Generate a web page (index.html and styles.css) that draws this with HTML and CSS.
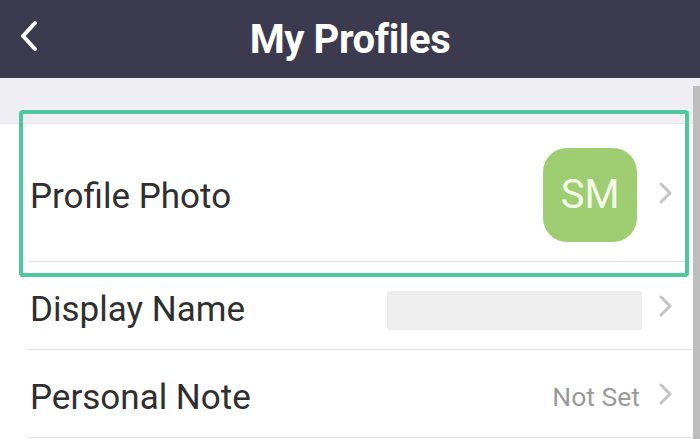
FILE: index.html
```html
<!DOCTYPE html>
<html>
<head>
<meta charset="utf-8">
<link rel="stylesheet" href="styles.css">
</head>
<body>
<div class="app">
  <header class="topbar">
    <span class="back">
      <svg width="22" height="32" viewBox="0 0 22 32"><path d="M17 3 L5 16 L17 29" fill="none" stroke="#fff" stroke-width="4" stroke-linecap="round" stroke-linejoin="round"/></svg>
    </span>
    <h1 class="title">My Profiles</h1>
  </header>
  <div class="content">
    <div class="band"></div>
    <ul class="list">
      <li class="row row-photo">
        <span class="label">Profile Photo</span>
        <span class="value">
          <span class="avatar">SM</span>
          <svg class="chev" width="16" height="24" viewBox="0 0 16 24"><path d="M3 3 L12 12 L3 21" fill="none" stroke="#c4c4c4" stroke-width="3" stroke-linecap="round" stroke-linejoin="round"/></svg>
        </span>
      </li>
      <li class="row">
        <span class="label">Display Name</span>
        <span class="value">
          <span class="blank"></span>
          <svg class="chev" width="16" height="24" viewBox="0 0 16 24"><path d="M3 3 L12 12 L3 21" fill="none" stroke="#c4c4c4" stroke-width="3" stroke-linecap="round" stroke-linejoin="round"/></svg>
        </span>
      </li>
      <li class="row">
        <span class="label">Personal Note</span>
        <span class="value">
          <span class="muted">Not Set</span>
          <svg class="chev" width="16" height="24" viewBox="0 0 16 24"><path d="M3 3 L12 12 L3 21" fill="none" stroke="#c4c4c4" stroke-width="3" stroke-linecap="round" stroke-linejoin="round"/></svg>
        </span>
      </li>
    </ul>
    <div class="highlight"></div>
    <div class="scrollbar"></div>
  </div>
</div>
</body>
</html>
```
FILE: styles.css
```css
* { box-sizing: border-box; }
html, body { margin: 0; padding: 0; }
body {
  width: 700px;
  height: 439px;
  overflow: hidden;
  background: #ffffff;
  font-family: Roboto, "Noto Sans", Arial, sans-serif;
}
.app { display: flex; flex-direction: column; height: 439px; }
.topbar {
  height: 78px;
  background: #3b3a4e;
  display: flex;
  align-items: center;
  justify-content: center;
  position: relative;
}
.back {
  position: absolute;
  left: 18px;
  top: 20px;
  display: flex;
}
.title {
  margin: 0;
  color: #ffffff;
  font-size: 40px;
  font-weight: 700;
  letter-spacing: -0.4px;
  line-height: 1;
  padding-top: 2px;
}
.content { position: relative; flex: 1; }
.band { height: 46px; background: #efeef2; border-bottom: 1px solid #e9e7ec; }
.list { list-style: none; margin: 0; padding: 0; background: #fff; }
.row {
  margin-left: 28px;
  margin-right: 8px;
  padding-left: 2px;
  height: 88px;
  border-bottom: 1px solid #e3e3e3;
  display: flex;
  align-items: center;
  justify-content: space-between;
}
.row-photo { height: 138px; }
.label {
  font-size: 35px;
  color: #2f2f2f;
  white-space: nowrap;
  padding-top: 8px;
}
.value { display: flex; align-items: center; }
.avatar {
  width: 94px;
  height: 94px;
  border-radius: 24px;
  background: #9fce72;
  color: #f3fbe9;
  font-size: 40px;
  display: flex;
  align-items: center;
  justify-content: center;
  margin-right: 21px;
  margin-top: 4px;
}
.blank {
  width: 255px;
  height: 39px;
  background: #eeeeee;
  border-radius: 2px;
  margin-right: 16px;
  margin-top: 9px;
}
.muted {
  font-size: 26.5px;
  color: #9a9a9a;
  margin-right: 18px;
  padding-top: 6px;
}
.chev { margin-right: 18px; }
.highlight {
  position: absolute;
  left: 19px;
  top: 32px;
  width: 670px;
  height: 167px;
  border: 4px solid #4fc89d;
  border-radius: 4px;
}
.scrollbar {
  position: absolute;
  right: 0;
  top: 8px;
  width: 7px;
  bottom: 0;
  background: #bdbdbd;
}
```
